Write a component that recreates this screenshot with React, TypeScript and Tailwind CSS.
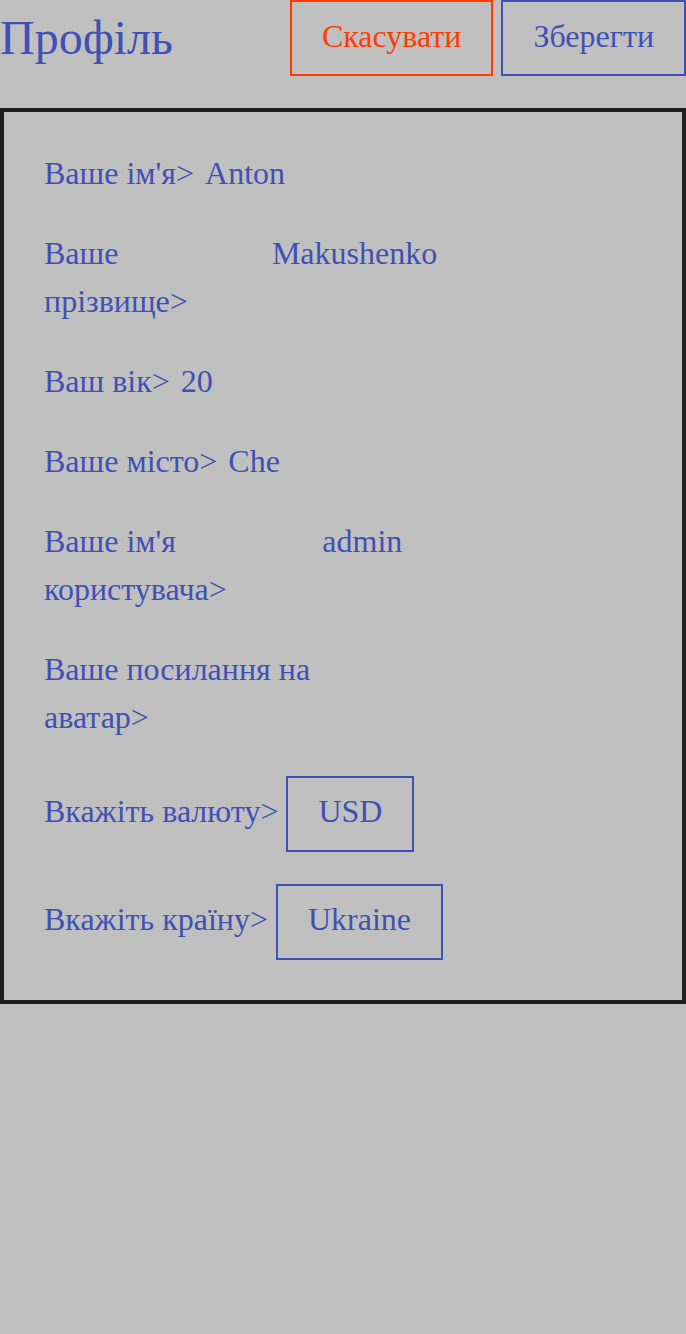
const fields = [
  { label: "Ваше ім'я>", value: "Anton" },
  { label: "Ваше прізвище>", value: "Makushenko" },
  { label: "Ваш вік>", value: "20" },
  { label: "Ваше місто>", value: "Che" },
  { label: "Ваше ім'я користувача>", value: "admin" },
  { label: "Ваше посилання на аватар>", value: "" },
];

const selects = [
  { label: "Вкажіть валюту>", value: "USD" },
  { label: "Вкажіть країну>", value: "Ukraine" },
];

export default function App() {
  return (
    <div className="min-h-[1334px] bg-[#c0c0c0] text-[#3f51b5] font-['Liberation_Serif',serif]">
      {/* header */}
      <div className="flex items-center justify-between">
        <h1 className="text-[48px] leading-none">Профіль</h1>
        <div className="flex gap-2">
          <button className="h-[76px] border-2 border-[#ff3d00] px-[30px] pb-[5px] text-[32px] text-[#ff3d00]">
            Скасувати
          </button>
          <button className="h-[76px] border-2 border-[#3f51b5] px-[30px] pb-[5px] text-[32px]">
            Зберегти
          </button>
        </div>
      </div>

      {/* form card */}
      <div className="mt-[32px] border-4 border-[#1e1e1e] px-10 pt-[37px] pb-[40px] text-[32px] leading-[48px]">
        <div className="flex flex-col gap-8">
          {fields.map((f) => (
            <div key={f.label} className="flex items-start gap-2">
              <span>{f.label}</span>
              <div className="w-[389px] min-w-0 pl-[3px]">{f.value}</div>
            </div>
          ))}
          <div className="mt-[3px] flex flex-col gap-8">
            {selects.map((s) => (
              <div key={s.label} className="flex items-start gap-2">
                <span className="pt-[11px]">{s.label}</span>
                <div className="border-2 border-[#3f51b5] px-[30px] pt-[9px] pb-[15px]">{s.value}</div>
              </div>
            ))}
          </div>
        </div>
      </div>
    </div>
  );
}
